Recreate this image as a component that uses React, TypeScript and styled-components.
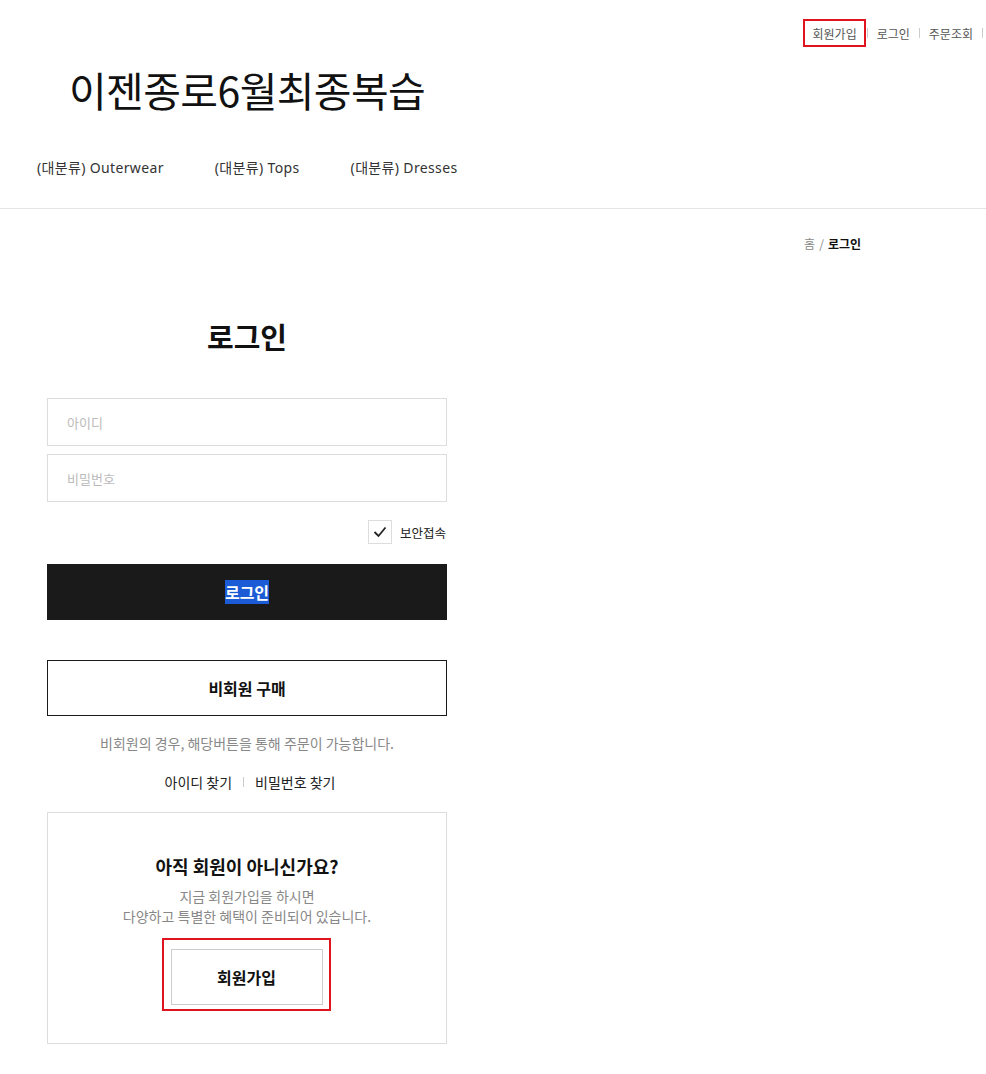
import React from "react";
import styled, { createGlobalStyle } from "styled-components";

const GlobalStyle = createGlobalStyle`
  html, body { margin: 0; padding: 0; background: #fff; }
  body { font-family: "Noto Sans CJK KR", "Noto Sans", sans-serif; color: #1a1a1a; }
  * { box-sizing: border-box; }
`;

const Header = styled.header`
  border-bottom: 1px solid #e5e5e5;
`;

const TopBar = styled.div`
  display: flex;
  justify-content: flex-end;
  align-items: center;
  padding: 19px 3px 0 0;
  height: 47px;
`;

const UtilLink = styled.a<{ $boxed?: boolean }>`
  display: flex;
  align-items: center;
  height: 28px;
  font-size: 12px;
  color: #555;
  text-decoration: none;
  padding: 0 7px 0 ${(p) => (p.$boxed ? "8px" : "7px")};
  border: 2px solid ${(p) => (p.$boxed ? "#e0141e" : "transparent")};
  margin-right: ${(p) => (p.$boxed ? "1px" : "0")};
`;

const Sep = styled.span`
  width: 1px;
  height: 10px;
  background: #ccc;
`;

const Logo = styled.h1`
  margin: 17px 0 0 69px;
  font-size: 41px;
  font-weight: 400;
  line-height: 50px;
  color: #111;
  letter-spacing: -0.6px;
`;

const Nav = styled.nav`
  display: flex;
  gap: 51px;
  padding: 44px 0 30px 37px;
`;

const NavItem = styled.a`
  font-family: "Noto Sans", "Noto Sans CJK KR", sans-serif;
  font-size: 14px;
  line-height: 20px;
  letter-spacing: 0.35px;
  color: #333;
  text-decoration: none;
`;

const Main = styled.main`
  width: 814px;
  margin-left: 47px;
  padding-bottom: 30px;
`;

const Breadcrumb = styled.div`
  display: flex;
  justify-content: flex-end;
  gap: 4px;
  font-size: 12px;
  line-height: 16px;
  padding-top: 27px;
  color: #888;
`;

const Crumb = styled.span<{ $current?: boolean }>`
  color: ${(p) => (p.$current ? "#111" : "#888")};
  font-weight: ${(p) => (p.$current ? 700 : 400)};
`;

const Column = styled.div`
  width: 400px;
  display: flex;
  flex-direction: column;
`;

const Title = styled.h2`
  margin: 64px 0 0 0;
  text-align: center;
  font-size: 29px;
  line-height: 40px;
  font-weight: 700;
  color: #111;
`;

const Input = styled.input`
  height: 48px;
  width: 100%;
  border: 1px solid #ddd;
  padding: 0 19px;
  font-size: 13px;
  font-family: inherit;
  outline: none;
  &::placeholder { color: #bbb; }
`;

const Inputs = styled.div`
  display: flex;
  flex-direction: column;
  gap: 8px;
  margin-top: 42px;
`;

const CheckRow = styled.label`
  display: flex;
  justify-content: flex-end;
  align-items: center;
  gap: 8px;
  margin-top: 18px;
  margin-right: 1px;
  font-size: 12.5px;
  color: #222;
`;

const CheckBox = styled.span`
  width: 24px;
  height: 24px;
  border: 1px solid #ddd;
  display: flex;
  align-items: center;
  justify-content: center;
`;

const Button = styled.button<{ $variant: "dark" | "outline" | "light" }>`
  height: 56px;
  width: 100%;
  font-family: inherit;
  font-size: 16px;
  font-weight: 700;
  cursor: pointer;
  background: ${(p) => (p.$variant === "dark" ? "#1a1a1a" : "#fff")};
  color: ${(p) => (p.$variant === "dark" ? "#fff" : "#111")};
  border: 1px solid ${(p) => (p.$variant === "light" ? "#ccc" : "#1a1a1a")};
`;

const LoginButton = styled(Button)`
  margin-top: 20px;
`;

const GuestButton = styled(Button)`
  margin-top: 40px;
`;

const Selected = styled.span`
  background: #1c5bd6;
  color: #fff;
`;

const Note = styled.p`
  margin: 17px 0 0 0;
  text-align: center;
  font-size: 14px;
  color: #888;
  line-height: 20px;
`;

const FindLinks = styled.div`
  display: flex;
  justify-content: center;
  align-items: center;
  gap: 11px;
  margin-top: 19px;
  padding-left: 6px;
  font-size: 14px;
  line-height: 20px;
  color: #222;
`;

const JoinBox = styled.section`
  margin-top: 20px;
  border: 1px solid #ddd;
  display: flex;
  flex-direction: column;
  align-items: center;
  padding: 40px 0 32px;
`;

const JoinTitle = styled.h3`
  margin: 0;
  font-size: 18px;
  font-weight: 700;
  line-height: 26px;
  color: #111;
`;

const JoinText = styled.p`
  margin: 7px 0 0 0;
  text-align: center;
  font-size: 14px;
  line-height: 20px;
  color: #888;
`;

const Highlight = styled.div`
  margin-top: 12px;
  margin-right: 2px;
  border: 2px solid #e0141e;
  padding: 9px 6px 4px 7px;
`;

const JoinButton = styled(Button)`
  width: 152px;
  height: 56px;
`;

export default function App() {
  return (
    <>
      <GlobalStyle />
      <Header>
        <TopBar>
          <UtilLink $boxed href="#">회원가입</UtilLink>
          <Sep />
          <UtilLink href="#">로그인</UtilLink>
          <Sep />
          <UtilLink href="#">주문조회</UtilLink>
          <Sep />
        </TopBar>
        <Logo>이젠종로6월최종복습</Logo>
        <Nav>
          <NavItem href="#">(대분류) Outerwear</NavItem>
          <NavItem href="#">(대분류) Tops</NavItem>
          <NavItem href="#">(대분류) Dresses</NavItem>
        </Nav>
      </Header>
      <Main>
        <Breadcrumb>
          <Crumb>홈</Crumb>
          <Crumb>/</Crumb>
          <Crumb $current>로그인</Crumb>
        </Breadcrumb>
        <Column>
          <Title>로그인</Title>
          <Inputs>
            <Input placeholder="아이디" />
            <Input type="password" placeholder="비밀번호" />
          </Inputs>
          <CheckRow>
            <CheckBox>
              <svg width="14" height="12" viewBox="0 0 14 12">
                <polyline points="1.5,6 5.5,10 12.5,1.5" fill="none" stroke="#222" strokeWidth="1.8" />
              </svg>
            </CheckBox>
            보안접속
          </CheckRow>
          <LoginButton $variant="dark"><Selected>로그인</Selected></LoginButton>
          <GuestButton $variant="outline">비회원 구매</GuestButton>
          <Note>비회원의 경우, 해당버튼을 통해 주문이 가능합니다.</Note>
          <FindLinks>
            <span>아이디 찾기</span>
            <Sep />
            <span>비밀번호 찾기</span>
          </FindLinks>
          <JoinBox>
            <JoinTitle>아직 회원이 아니신가요?</JoinTitle>
            <JoinText>지금 회원가입을 하시면<br />다양하고 특별한 혜택이 준비되어 있습니다.</JoinText>
            <Highlight>
              <JoinButton $variant="light">회원가입</JoinButton>
            </Highlight>
          </JoinBox>
        </Column>
      </Main>
    </>
  );
}
